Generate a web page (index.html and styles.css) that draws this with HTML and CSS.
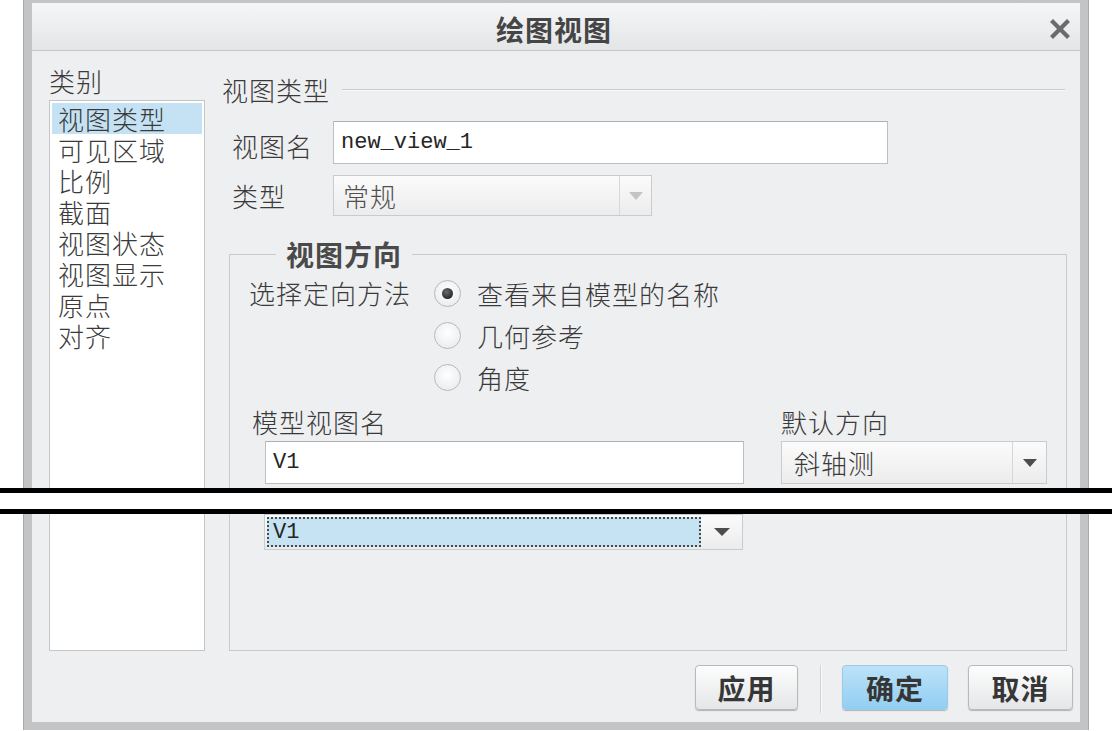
FILE: index.html
```html
<!DOCTYPE html>
<html lang="zh-CN">
<head>
    <meta charset="UTF-8">
    <title>绘图视图</title>
    <link rel="stylesheet" href="styles.css">
</head>
<body>
    <!-- Dialog window -->
    <div class="dialog">
        <div class="titlebar">
            <span class="title">绘图视图</span>
            <span class="close">
                <svg width="20" height="20" viewBox="0 0 20 20"><path d="M3 3 L17 17 M17 3 L3 17" stroke="#6b6b6b" stroke-width="4.2" stroke-linecap="square"/></svg>
            </span>
        </div>

        <div class="content">
            <!-- Category list -->
            <div class="categories">
                <div class="cat-label">类别</div>
                <ul class="cat-list">
                    <li class="selected">视图类型</li>
                    <li>可见区域</li>
                    <li>比例</li>
                    <li>截面</li>
                    <li>视图状态</li>
                    <li>视图显示</li>
                    <li>原点</li>
                    <li>对齐</li>
                </ul>
            </div>

            <!-- Main panel -->
            <div class="panel">
                <div class="section-head">
                    <span>视图类型</span>
                    <span class="rule"></span>
                </div>

                <div class="field-row name-row">
                    <label class="field-label">视图名</label>
                    <div class="text-input name-input">new_view_1</div>
                </div>

                <div class="field-row type-row">
                    <label class="field-label">类型</label>
                    <div class="select disabled type-select">
                        <span class="value">常规</span>
                        <span class="arrow"><svg width="14" height="8" viewBox="0 0 14 8"><path d="M0 0 H14 L7 8 Z" fill="#c4c4c4"/></svg></span>
                    </div>
                </div>

                <fieldset class="orient">
                    <legend>视图方向</legend>

                    <div class="method-row">
                        <span class="method-label">选择定向方法</span>
                        <div class="radios">
                            <div class="radio"><span class="dot checked"></span>查看来自模型的名称</div>
                            <div class="radio"><span class="dot"></span>几何参考</div>
                            <div class="radio"><span class="dot"></span>角度</div>
                        </div>
                    </div>

                    <div class="model-row">
                        <div class="model-col">
                            <div class="sub-label">模型视图名</div>
                            <div class="text-input model-input">V1</div>
                        </div>
                        <div class="default-col">
                            <div class="sub-label">默认方向</div>
                            <div class="select default-select">
                                <span class="value">斜轴测</span>
                                <span class="arrow"><svg width="14" height="8" viewBox="0 0 14 8"><path d="M0 0 H14 L7 8 Z" fill="#4d4d4d"/></svg></span>
                            </div>
                        </div>
                    </div>

                    <div class="select view-select">
                        <span class="value focused">V1</span>
                        <span class="arrow"><svg width="16" height="8" viewBox="0 0 16 8"><path d="M0 0 H16 L8 8 Z" fill="#4d4d4d"/></svg></span>
                    </div>
                </fieldset>
            </div>
        </div>

        <!-- Buttons -->
        <div class="footer">
            <button class="btn apply">应用</button>
            <span class="btn-sep"></span>
            <button class="btn ok">确定</button>
            <button class="btn cancel">取消</button>
        </div>
    </div>

    <!-- cut marks over the picture -->
    <div class="cut"></div>
</body>
</html>
```

FILE: styles.css
```css
body {
    margin: 0;
    background-color: #fff;
    font-family: "Noto Sans CJK SC", "Noto Sans", sans-serif;
    font-size: 26px;
    font-weight: 300;
    letter-spacing: 1px;
    color: #3a3a3a;
}

/* Dialog frame */
.dialog {
    margin-left: 24px;
    width: 1064px;
    height: 730px;
    box-sizing: border-box;
    border-style: solid;
    border-color: #c3c4c6;
    border-width: 3px 8px 8px 8px;
    background-color: #eeeff1;
    box-shadow: -1px 0 0 #a9aaac, 1px 0 0 #a9aaac;
}

.titlebar {
    height: 47px;
    display: flex;
    align-items: center;
    border-bottom: 1px solid #c6c7c9;
    background: linear-gradient(#f5f6f7, #e4e5e7);
}

.title {
    flex: 1;
    text-align: center;
    font-size: 28px;
    font-weight: bold;
    color: #454545;
    padding-top: 5px;
    padding-left: 40px;
    margin-right: 4px;
}

.close {
    width: 40px;
    display: flex;
    justify-content: center;
    padding-top: 5px;
}

/* Content area */
.content {
    display: flex;
    padding-left: 17px;
    height: 600px;
}

.categories {
    width: 156px;
}

.cat-label {
    margin-top: 15px;
    height: 30px;
    line-height: 30px;
    margin-bottom: 4px;
}

.cat-list {
    list-style: none;
    margin: 0;
    padding: 2px 2px;
    height: 551px;
    box-sizing: border-box;
    border: 1px solid #c5c6c8;
    background-color: #fff;
}

.cat-list li {
    height: 31px;
    line-height: 32px;
    padding-left: 6px;
}

.cat-list li.selected {
    background-color: #c4e2f3;
}

.panel {
    margin-left: 17px;
    width: 845px;
}

.section-head {
    display: flex;
    align-items: center;
    margin-top: 24px;
    height: 30px;
    line-height: 30px;
}

.section-head .rule {
    flex: 1;
    margin-left: 12px;
    margin-right: 2px;
    border-top: 1px solid #c8c9cb;
    border-bottom: 1px solid #fafafa;
}

.field-row {
    display: flex;
    align-items: center;
    padding-left: 10px;
}

.field-label {
    width: 101px;
}

.name-row {
    margin-top: 16px;
}

.name-row .field-label {
    padding-top: 6px;
}

.type-row {
    margin-top: 11px;
}

.text-input {
    display: flex;
    align-items: center;
    box-sizing: border-box;
    background-color: #fff;
    border: 1px solid #bdbec0;
    border-top-color: #aeafb1;
    font-family: "Liberation Mono", monospace;
    font-size: 22px;
    font-weight: normal;
    letter-spacing: 0;
    color: #262626;
    padding-left: 7px;
}

.name-input {
    width: 555px;
    height: 43px;
}

/* Drop-down lists */
.select {
    display: flex;
    box-sizing: border-box;
    border: 1px solid #cacbcd;
    background: linear-gradient(#fbfbfb, #ececed);
}

.select .value {
    flex: 1;
    display: flex;
    align-items: center;
    padding-left: 9px;
}

.select .arrow {
    width: 31px;
    display: flex;
    align-items: center;
    justify-content: center;
    border-left: 1px solid #d6d7d9;
}

.type-select {
    width: 319px;
    height: 41px;
}

.select.disabled .value {
    color: #505050;
}

/* View orientation group */
.orient {
    margin: 23px 0 0 7px;
    padding: 0 0 0 19px;
    width: 838px;
    height: 412px;
    box-sizing: border-box;
    border: 1px solid #c9cacc;
}

.orient legend {
    margin-left: 27px;
    padding: 0 10px;
    line-height: 30px;
    font-size: 28px;
    font-weight: bold;
    color: #4a4a4a;
}

.method-row {
    display: flex;
    margin-top: 3px;
}

.method-label {
    width: 183px;
    line-height: 42px;
}

.radio {
    height: 42px;
    display: flex;
    align-items: center;
}

.dot {
    width: 27px;
    height: 27px;
    box-sizing: border-box;
    margin: 0 16px 0 2px;
    border-radius: 50%;
    border: 1px solid #b7b8ba;
    background: radial-gradient(circle at 50% 40%, #ffffff, #e6e7e9);
    display: flex;
    align-items: center;
    justify-content: center;
}

.dot.checked::after {
    content: "";
    width: 11px;
    height: 11px;
    border-radius: 50%;
    background: radial-gradient(circle at 40% 35%, #6a6a6a, #111);
}

.model-row {
    display: flex;
    margin-top: 9px;
}

.model-col {
    margin-left: 3px;
    width: 492px;
}

.sub-label {
    line-height: 30px;
    height: 30px;
    margin-bottom: 4px;
}

.model-input {
    margin-left: 13px;
    width: 479px;
    height: 43px;
}

.default-col {
    margin-left: 37px;
}

.default-select {
    width: 266px;
    height: 43px;
}

.default-select .value {
    padding-left: 12px;
}

.default-select .arrow {
    width: 33px;
}

.view-select {
    margin: 30px 0 0 15px;
    width: 479px;
    height: 36px;
}

.view-select .value.focused {
    margin: 2px 0 2px 2px;
    padding-left: 4px;
    background-color: #c5e3f3;
    border: 2px dotted #4a4a4a;
    font-family: "Liberation Mono", monospace;
    font-size: 22px;
    font-weight: normal;
    letter-spacing: 0;
    color: #262626;
}

.view-select .arrow {
    width: 41px;
    border-left: none;
}

/* Footer buttons */
.footer {
    display: flex;
    justify-content: flex-end;
    align-items: flex-start;
    padding: 14px 7px 0 0;
}

.btn {
    height: 45px;
    border: 1px solid #b8b9bb;
    border-radius: 4px;
    background: linear-gradient(#fdfdfd, #e5e6e8);
    box-shadow: 0 1px 1px rgba(0, 0, 0, 0.25);
    font-family: "Noto Sans CJK SC", sans-serif;
    font-size: 28px;
    font-weight: bold;
    letter-spacing: 1px;
    color: #363636;
    padding: 0;
}

.apply {
    width: 103px;
}

.btn-sep {
    width: 1px;
    height: 48px;
    margin: 0 21px 0 22px;
    background-color: #d2d3d5;
    box-shadow: 1px 0 0 #fafafa;
}

.ok {
    width: 106px;
    margin-right: 20px;
    border-color: #9ccbe8;
    background: linear-gradient(#bce2f8, #92cef2);
}

.cancel {
    width: 105px;
}

.cut {
    position: absolute;
    left: 0;
    top: 488px;
    width: 1112px;
    height: 26px;
    box-sizing: border-box;
    border-top: 5px solid #000;
    border-bottom: 5px solid #000;
    background-color: #fff;
}
```
